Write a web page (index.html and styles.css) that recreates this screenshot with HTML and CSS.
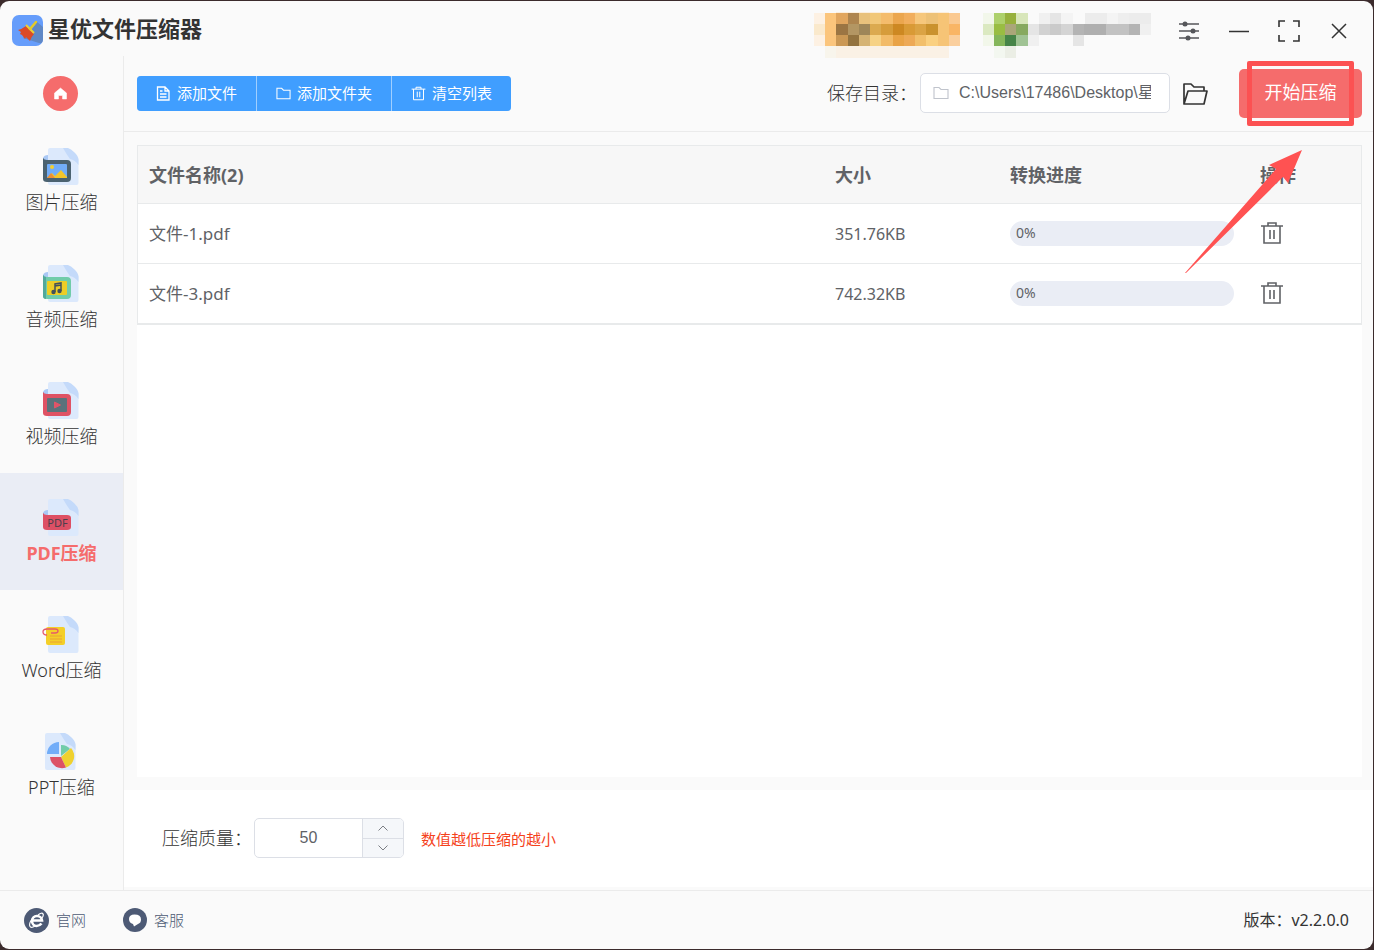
FILE: index.html
```html
<!DOCTYPE html>
<html lang="zh-CN">
<head>
<meta charset="utf-8">
<title>星优文件压缩器</title>
<link rel="stylesheet" href="styles.css">
</head>
<body>
<svg class="defs" width="0" height="0" aria-hidden="true">
  <symbol id="paper" viewBox="0 0 37 37">
    <path d="M7 0H24L35.500 11V35Q35.500 37 33.500 37H7Q5 37 5 35V2Q5 0 7 0Z" fill="#dce9fc"/>
    <path d="M20 0H25Q28 1 31 4Q35.500 8 35.500 12V17Q32 12 27 11Q24 7 20 0Z" fill="#c4dafa"/>
  </symbol>
  <symbol id="flap" viewBox="0 0 37 37">
    <path d="M0 13V10Q1 7 5 7V14H0Z" fill="#a9c8f5"/>
  </symbol>
  <symbol id="folder" viewBox="0 0 16 16">
    <path d="M1 2.500H6L8 4.500H15V13.500H1Z" fill="none" stroke="currentColor" stroke-width="1.100"/>
  </symbol>
  <symbol id="trash" viewBox="0 0 24 24">
    <path d="M1 5H23M8 5V2H16V5M4 5V22H20V5M10 9V18M14 9V18" fill="none" stroke="currentColor" stroke-width="1.600"/>
  </symbol>
</svg>

<div class="window">
  <header class="titlebar">
    <svg class="logo" viewBox="0 0 31 31" aria-hidden="true">
      <rect width="31" height="31" rx="7" fill="#669dfb"/>
      <path d="M25 7L31 12V24Q31 29 27 28L11 23L20 14Z" fill="#6088c6"/>
      <path d="M14 11L22 19Q19 22 18 26L14 22L13 24L10 20L8 19L9 17L6 15Q10 14 14 11Z" fill="#dc4a27"/>
      <path d="M14 10L22 18" stroke="#f0cf32" stroke-width="2"/>
      <path d="M18 14L24 7" stroke="#e5ca26" stroke-width="2.500" stroke-linecap="round"/>
    </svg>
    <h1 class="title">星优文件压缩器</h1>
    <svg class="mosaic mosaic-vip" viewBox="0 0 146 48" shape-rendering="crispEdges" aria-hidden="true">
      <path fill="#fdf1e3" d="M0 3h11v11H0zM0 25h11v11H0z"/><path fill="#fae9cc" d="M0 14h11v11H0z"/>
      <path fill="#fbeedd" d="M22 2h113v1H22z"/><path fill="#f8f5ec" d="M11 36h11v12H11z"/><path fill="#faf1e5" d="M22 36h113v12H22z"/>
      <path fill="#fbc57c" d="M11 3h11v33H11z"/>
      <path fill="#e1a65f" d="M22 3h12v11H22z"/><path fill="#ae854f" d="M34 3h11v11H34z"/><path fill="#e8c17c" d="M45 3h11v11H45z"/><path fill="#f1c778" d="M56 3h11v11H56z"/><path fill="#f4bc6c" d="M67 3h12v11H67z"/><path fill="#eba64e" d="M79 3h11v11H79z"/><path fill="#f1ae5d" d="M90 3h11v11H90z"/><path fill="#f6c77c" d="M101 3h11v11H101z"/><path fill="#edc177" d="M112 3h12v11H112z"/><path fill="#f6c476" d="M124 3h11v33H124z"/><path fill="#fac991" d="M135 3h11v11H135z"/>
      <path fill="#9b7543" d="M22 14h12v11H22z"/><path fill="#b39663" d="M34 14h11v11H34z"/><path fill="#9e8659" d="M45 14h11v11H45z"/><path fill="#dbaa50" d="M56 14h11v11H56z"/><path fill="#d69c3b" d="M67 14h12v11H67z"/><path fill="#cd8822" d="M79 14h11v11H79z"/><path fill="#d99a36" d="M90 14h11v11H90z"/><path fill="#dba344" d="M101 14h11v11H101z"/><path fill="#ca922e" d="M112 14h12v11H112z"/><path fill="#f9b565" d="M135 14h11v11H135z"/>
      <path fill="#cb9854" d="M22 25h12v11H22z"/><path fill="#93733f" d="M34 25h11v11H34z"/><path fill="#d5b374" d="M45 25h11v11H45z"/><path fill="#f6d285" d="M56 25h11v11H56z"/><path fill="#f2bb68" d="M67 25h12v11H67z"/><path fill="#e9a346" d="M79 25h11v11H79z"/><path fill="#eda956" d="M90 25h11v11H90z"/><path fill="#f2bf6b" d="M101 25h11v11H101z"/><path fill="#fad080" d="M112 25h12v11H112z"/><path fill="#facf9e" d="M135 25h11v11H135z"/>
    </svg>
    <svg class="mosaic mosaic-user" viewBox="0 0 168 48" shape-rendering="crispEdges" aria-hidden="true">
      <path fill="#f2f7ea" d="M0 3h11v11H0zM0 25h11v11H0z"/><path fill="#dbe9c1" d="M0 14h11v11H0z"/>
      <path fill="#add06b" d="M11 3h11v11H11z"/><path fill="#97b03d" d="M22 3h11v11H22z"/><path fill="#d8e6ba" d="M33 3h12v11H33z"/>
      <path fill="#99bd42" d="M11 14h11v11H11z"/><path fill="#aaa679" d="M22 14h11v11H22z"/><path fill="#87a95f" d="M33 14h12v11H33z"/>
      <path fill="#84b65a" d="M11 25h11v11H11z"/><path fill="#468448" d="M22 25h11v11H22z"/><path fill="#a0c394" d="M33 25h12v11H33z"/>
      <path fill="#f3f7f0" d="M11 36h11v12H11z"/><path fill="#ebeee5" d="M22 36h11v12H22z"/>
      <path fill="#f0f0f0" d="M56 3h11v11H56zM157 14h11v11H157zM45 25h11v11H45z"/><path fill="#e5e5e5" d="M67 3h11v11H67zM45 14h11v11H45zM90 25h11v11H90z"/><path fill="#ececec" d="M102 3h22v11H102zM146 3h22v11H146z"/><path fill="#f4f4f4" d="M78 3h12v11H78zM124 3h11v11H124z"/><path fill="#eee" d="M135 3h11v11H135z"/>
      <path fill="#d2d2d2" d="M56 14h11v11H56z"/><path fill="#cacaca" d="M67 14h11v11H67z"/><path fill="#d4d4d4" d="M78 14h12v11H78z"/><path fill="#b4b4b4" d="M90 14h11v11H90zM146 14h11v11H146z"/><path fill="#afafaf" d="M101 14h22v11H101z"/><path fill="#c2c2c2" d="M123 14h23v11H123z"/>
    </svg>
    <div class="window-buttons">
      <button class="icon-button" type="button" aria-label="设置"><svg width="22" height="20" viewBox="0 0 22 20"><path d="M1 3H21M1 10H21M1 17H21" stroke="#55565a" stroke-width="1.500"/><g fill="#55565a"><circle cx="7" cy="3" r="2.500"/><circle cx="15" cy="10" r="2.500"/><circle cx="10" cy="17" r="2.500"/></g></svg></button>
      <button class="icon-button" type="button" aria-label="最小化"><svg width="22" height="20" viewBox="0 0 22 20"><path d="M1 10.500H21" stroke="#333" stroke-width="1.500"/></svg></button>
      <button class="icon-button" type="button" aria-label="最大化"><svg width="22" height="22" viewBox="0 0 22 22"><path d="M1 7V1H7M15 1H21V7M21 15V21H15M7 21H1V15" fill="none" stroke="#333" stroke-width="1.600"/></svg></button>
      <button class="icon-button" type="button" aria-label="关闭"><svg width="22" height="20" viewBox="0 0 22 20"><path d="M4 3L18 17M18 3L4 17" stroke="#333" stroke-width="1.500"/></svg></button>
    </div>
  </header>

  <nav class="sidebar">
    <a class="home" href="#" aria-label="首页"><svg width="13" height="13" viewBox="0 0 13 13"><path d="M6.500 1L12.500 6V12H8.500V8.500H4.500V12H0.500V6Z" fill="#fff" stroke="#fff" stroke-width="0.500" stroke-linejoin="round"/></svg></a>
    <a class="nav-item" href="#">
      <svg class="nav-icon" viewBox="0 0 37 37"><use href="#paper"/><use href="#flap"/><path d="M0 10Q1 12 4 12H24Q28 12 28 16V30Q28 34 24 34H4Q0 34 0 31Z" fill="#4b6270"/><rect x="4" y="16" width="20" height="14" rx="1" fill="#72adf8"/><circle cx="9" cy="19" r="2" fill="#f1cf31"/><path d="M4 30L9 25L12 28L18 22L24 29V30Z" fill="#f4c52b"/><path d="M4 30L8 25L12 30Z" fill="#ed8f35"/></svg>
      <span>图片压缩</span></a>
    <a class="nav-item" href="#">
      <svg class="nav-icon" viewBox="0 0 37 37"><use href="#paper"/><use href="#flap"/><path d="M0 10Q1 12 4 12H24Q28 12 28 16V30Q28 34 24 34H4Q0 34 0 31Z" fill="#71cca9"/><path d="M0 10Q1 12 3 12V34Q0 34 0 31Z" fill="#52a99b"/><rect x="4" y="16" width="20" height="14" rx="1" fill="#edcd26"/><path d="M12 27V19L18 18V26M12 21L18 20" fill="none" stroke="#43515a" stroke-width="1.500"/><circle cx="10.500" cy="27" r="2.200" fill="#43515a"/><circle cx="16.500" cy="26" r="2.200" fill="#43515a"/></svg>
      <span>音频压缩</span></a>
    <a class="nav-item" href="#">
      <svg class="nav-icon" viewBox="0 0 37 37"><use href="#paper"/><use href="#flap"/><path d="M0 10Q1 12 4 12H24Q28 12 28 16V30Q28 34 24 34H4Q0 34 0 31Z" fill="#df5264"/><rect x="4" y="16" width="20" height="14" rx="1" fill="#5a727b"/><path d="M11.500 20L17.500 23L11.500 26Z" fill="#e05468" stroke="#e05468" stroke-linejoin="round"/></svg>
      <span>视频压缩</span></a>
    <a class="nav-item active" href="#" aria-current="page">
      <svg class="nav-icon" viewBox="0 0 37 37"><use href="#paper"/><path d="M0 16V14Q1 11 5 11V17H0Z" fill="#a9c8f5"/><path d="M0 14Q1 16 4 16H24Q28 16 28 19V28Q28 31 24 31H4Q0 31 0 28Z" fill="#dd5065"/><text x="14.500" y="27.500" text-anchor="middle" class="pdf-mark">PDF</text></svg>
      <span>PDF压缩</span></a>
    <a class="nav-item" href="#">
      <svg class="nav-icon" viewBox="0 0 37 37"><use href="#paper"/><rect x="3" y="11" width="19" height="18" rx="2" fill="#f4cf28"/><path d="M7 20H19M7 23H19M7 26H19" stroke="#e9a236"/><path d="M4 19Q0 19 0 16Q0 13 4 13H12Q15 13 15 15Q15 17 12 17H8" fill="none" stroke="#e5596c" stroke-width="1.300"/></svg>
      <span>Word压缩</span></a>
    <a class="nav-item" href="#">
      <svg class="nav-icon" viewBox="0 0 37 37"><use href="#paper" x="-3"/><path d="M16 21V9A12 12 0 0 0 4 21Z" fill="#72adf8"/><path d="M18 23V12A11 11 0 0 1 27 16Z" fill="#71cca9"/><path d="M18 24L28 15A12 12 0 0 1 23 34.500Z" fill="#efd12f"/><path d="M18 24H7A12 12 0 0 0 23 34.500Z" fill="#dc5266"/></svg>
      <span>PPT压缩</span></a>
  </nav>

  <main class="content">
    <div class="toolbar">
      <div class="button-group">
        <button type="button"><svg width="15" height="15" viewBox="0 0 15 15" fill="none" stroke="currentColor" stroke-width="1.300"><path d="M1.500 1H9L13 5V14H1.500ZM9 1V5H13M4 5H6.500M4 8H10.500M4 11H10.500"/></svg>添加文件</button>
        <button type="button"><svg width="15" height="15"><use href="#folder"/></svg>添加文件夹</button>
        <button type="button"><svg width="15" height="15"><use href="#trash"/></svg>清空列表</button>
      </div>
      <div class="save">
        <label for="path">保存目录：</label>
        <div class="path-box"><svg width="16" height="16"><use href="#folder"/></svg><input id="path" type="text" value="C:\Users\17486\Desktop\星优文件压缩器"></div>
        <button class="icon-button open-folder" type="button" aria-label="打开目录"><svg width="26" height="24" viewBox="0 0 26 24" fill="none" stroke="#333" stroke-width="1.700" stroke-linejoin="round"><path d="M2 22V2H9L12 5H22V9M2 22L6 9H25L22 22Z"/></svg></button>
        <div class="start-wrap">
          <button class="start" type="button">开始压缩</button>
          <span class="highlight"></span>
          <svg class="arrow" width="120" height="126" viewBox="0 0 120 126" aria-hidden="true"><path d="M117 1L84 16L91 20L0 124L1 124L98 28L103 34Z" fill="#ff5252"/></svg>
        </div>
      </div>
    </div>

    <section class="file-area">
      <table class="files">
        <colgroup><col><col class="col-size"><col class="col-progress"><col class="col-action"></colgroup>
        <thead><tr><th>文件名称(2)</th><th>大小</th><th>转换进度</th><th>操作</th></tr></thead>
        <tbody>
          <tr><td class="name">文件-1.pdf</td><td class="size">351.76KB</td><td><div class="progress">0%</div></td><td><button class="icon-button" type="button" aria-label="删除"><svg width="24" height="24"><use href="#trash"/></svg></button></td></tr>
          <tr><td class="name">文件-3.pdf</td><td class="size">742.32KB</td><td><div class="progress">0%</div></td><td><button class="icon-button" type="button" aria-label="删除"><svg width="24" height="24"><use href="#trash"/></svg></button></td></tr>
        </tbody>
      </table>
    </section>

    <section class="options">
      <label for="quality">压缩质量：</label>
      <div class="number-box">
        <input id="quality" type="number" value="50">
        <div class="steps">
          <button type="button" aria-label="增加"><svg width="12" height="8" viewBox="0 0 12 8"><path d="M1.500 6.500L6 2L10.500 6.500"/></svg></button>
          <button type="button" aria-label="减少"><svg width="12" height="8" viewBox="0 0 12 8"><path d="M1.500 1.500L6 6L10.500 1.500"/></svg></button>
        </div>
      </div>
      <p class="hint">数值越低压缩的越小</p>
    </section>
  </main>

  <footer class="footer">
    <a href="#"><svg width="25" height="25" viewBox="0 0 25 25"><circle cx="12.500" cy="12.500" r="12.500" fill="#4d5a75"/><path d="M17.500 15.500Q15.500 18 12.500 18A5 5 0 1 1 18 12.500H8.500" fill="none" stroke="#fff" stroke-width="2.600"/><path d="M8 11Q4 17 6.500 19Q8 20 11 18M14 7Q18 4 19 6Q20 7 18 10" fill="none" stroke="#fff" stroke-width="1.200"/></svg>官网</a>
    <a href="#"><svg width="24" height="24" viewBox="0 0 24 24"><circle cx="12" cy="12" r="12" fill="#4d5a75"/><path d="M6 11Q6 6.500 11.500 6.500Q18 6.500 18 11.500Q18 15 15 16L11 18.500L10 16Q6 15 6 11Z" fill="#fff"/></svg>客服</a>
    <span class="version">版本：v2.2.0.0</span>
  </footer>
</div>
</body>
</html>
```

FILE: styles.css
```css
* { box-sizing: border-box; }

body {
  margin: 0;
  background: #3b2b2c;
  font-family: "Noto Sans", "Noto Sans CJK SC", sans-serif;
  font-size: 18px;
  line-height: 24px;
  font-weight: 300;
  color: #333;
}

button, input { font: inherit; color: inherit; }
button { padding: 0; border: 0; background: none; cursor: pointer; }
a { color: inherit; text-decoration: none; }
svg { display: block; flex: none; }
.defs { position: absolute; }

.window {
  display: grid;
  grid-template: 55px 1fr 59px / 124px 1fr;
  min-height: calc(100vh - 2px);
  margin: 1px 1px 1px 0;
  border-radius: 9px;
  background: #fafafa;
}

.titlebar {
  grid-column: 1 / -1;
  display: flex;
  align-items: center;
  padding: 0 23px 0 12px;
}
.logo { width: 31px; height: 31px; margin-top: 3px; }
.title { margin: 0 auto 0 5px; font-size: 22px; font-weight: 700; line-height: 30px; padding-bottom: 2px; }
.mosaic { height: 48px; margin-top: 10px; }
.mosaic-vip { width: 146px; }
.mosaic-user { width: 168px; margin-left: 23px; }
.window-buttons {
  display: flex;
  align-items: center;
  gap: 28px;
  height: 22px;
  margin: 4px 0 0 27px;
}
.icon-button { display: flex; align-items: center; justify-content: center; }

.sidebar { border-right: 1px solid #ebebeb; }
.home {
  display: flex;
  align-items: center;
  justify-content: center;
  width: 35px;
  height: 35px;
  margin: 20px auto 11px 43px;
  border-radius: 50%;
  background: #f56c6c;
}
.nav-item {
  display: flex;
  flex-direction: column;
  align-items: center;
  gap: 5px;
  height: 117px;
  padding-top: 26px;
}
.nav-icon { width: 37px; height: 37px; overflow: visible; }
.nav-item.active { background: #eaedf5; color: #f56c6c; font-weight: 700; }
.pdf-mark { font-size: 11px; font-weight: 400; fill: #4b3f4c; }

.content { display: flex; flex-direction: column; min-width: 0; }
.toolbar {
  display: flex;
  align-items: center;
  justify-content: space-between;
  height: 76px;
  padding: 0 11px 0 13px;
  border-bottom: 1px solid #ebebeb;
}
.button-group {
  display: flex;
  gap: 1px;
  overflow: hidden;
  border-radius: 4px;
  background: #a0cfff;
}
.button-group button {
  display: flex;
  align-items: center;
  gap: 6px;
  height: 35px;
  padding: 0 19px 1px;
  background: #409eff;
  color: #fff;
  font-size: 15px;
  font-weight: 400;
}
.save { display: flex; align-items: center; }
.save label { padding-bottom: 2px; }
.path-box {
  display: flex;
  align-items: center;
  gap: 10px;
  width: 250px;
  height: 40px;
  margin: 0 0 1px 3px;
  padding: 0 18px 0 12px;
  border: 1px solid #dcdfe6;
  border-radius: 5px;
  background: #fff;
  color: #c0c4cc;
}
.path-box input, .number-box input {
  min-width: 0;
  padding: 0;
  border: 0;
  outline: 0;
  background: none;
  color: #606266;
  font-family: "Liberation Sans", "Noto Sans CJK SC", sans-serif;
  font-size: 16px;
  font-weight: 400;
}
.path-box input { flex: 1; }
.open-folder { margin: 1px 31px 0 12px; }
.start-wrap { position: relative; }
.start {
  width: 123px;
  height: 49px;
  padding-bottom: 3px;
  border-radius: 5px;
  background: #f56c6c;
  color: #fff;
  font-weight: 400;
}
.highlight {
  position: absolute;
  inset: -8px 8px -8px 8px;
  border: 5px solid #fc5152;
  border-radius: 2px;
  pointer-events: none;
}
.arrow { position: absolute; top: 80px; right: 57px; pointer-events: none; }

.file-area { flex: 1; margin: 13px 11px 13px 13px; background: #fff; }
.files {
  width: 100%;
  table-layout: fixed;
  border-collapse: separate;
  border-spacing: 0;
  border: 1px solid #e8eaeb;
  color: #606266;
  font-weight: 400;
}
.col-size { width: 175px; }
.col-progress { width: 250px; }
.col-action { width: 113px; }
.files th {
  height: 58px;
  padding: 1px 12px 0;
  border-bottom: 1px solid #e8eaeb;
  background: #f7f7f7;
  font-weight: 700;
  text-align: left;
}
.files td { height: 60px; padding: 0 12px; border-bottom: 1px solid #e8eaeb; }
.files .name { padding-left: 11px; font-size: 17px; }
.files .size { font-size: 16px; }
.files th:first-child { padding-left: 11px; }
.files .icon-button { margin-bottom: 2px; }
.progress {
  width: 224px;
  height: 25px;
  padding-left: 6px;
  border-radius: 13px;
  background: #eaedf5;
  font-size: 14px;
}

.options {
  display: flex;
  align-items: center;
  height: 97px;
  margin-bottom: 3px;
  padding: 0 38px 2px;
  background: #fff;
}
.number-box {
  display: flex;
  width: 150px;
  height: 40px;
  margin: 0 17px 0 2px;
  overflow: hidden;
  border: 1px solid #dcdfe6;
  border-radius: 5px;
}
.number-box input { flex: 1; text-align: center; appearance: textfield; }
.number-box input::-webkit-inner-spin-button { display: none; }
.steps {
  display: grid;
  grid-template-rows: 1fr 1fr;
  width: 41px;
  border-left: 1px solid #dcdfe6;
  background: #f5f7fa;
}
.steps button { display: flex; align-items: center; justify-content: center; }
.steps button + button { border-top: 1px solid #dcdfe6; }
.steps path { fill: none; stroke: #7b7e84; }
.hint { margin: 2px 0 0; color: #f5421c; font-size: 15px; font-weight: 400; }

.footer {
  grid-column: 1 / -1;
  display: flex;
  align-items: center;
  gap: 37px;
  padding: 0 24px;
  border-top: 1px solid #ebebeb;
}
.footer a { display: flex; align-items: center; gap: 7px; color: #4d5a75; font-size: 15px; }
.version { margin-left: auto; font-size: 16px; font-weight: 400; }
```
